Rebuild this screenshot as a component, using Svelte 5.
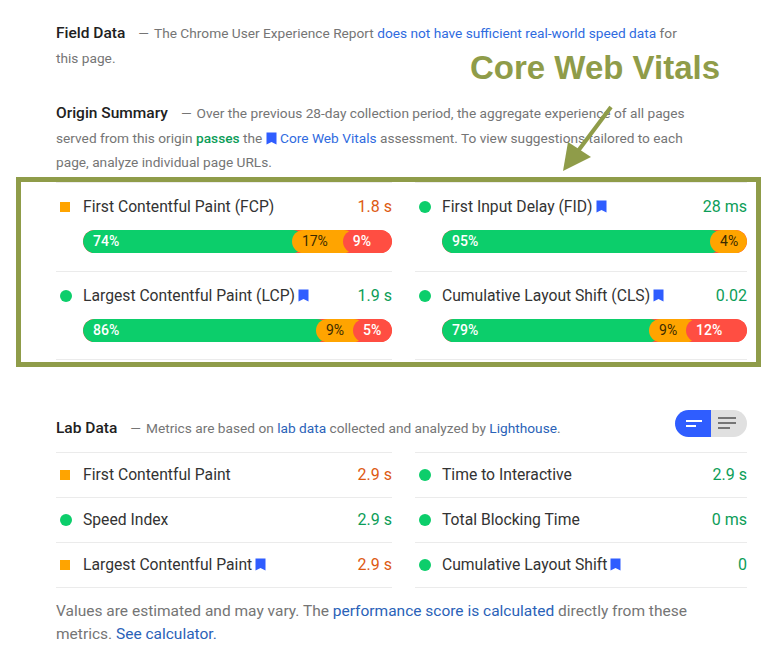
<script>
    const field = [
        { name: 'First Contentful Paint (FCP)', value: '1.8 s', rating: 'average', bars: [74, 17, 9], widths: [67.6, 16.5] },
        { name: 'First Input Delay (FID)', value: '28 ms', rating: 'pass', vital: true, bars: [95, 4], widths: [87.9] },
        { name: 'Largest Contentful Paint (LCP)', value: '1.9 s', rating: 'pass', vital: true, bars: [86, 9, 5], widths: [75.4, 12] },
        { name: 'Cumulative Layout Shift (CLS)', value: '0.02', rating: 'pass', vital: true, bars: [79, 9, 12], widths: [67.9, 12.1] }
    ];

    const lab = [
        { name: 'First Contentful Paint', value: '2.9 s', rating: 'average' },
        { name: 'Time to Interactive', value: '2.9 s', rating: 'pass' },
        { name: 'Speed Index', value: '2.9 s', rating: 'pass' },
        { name: 'Total Blocking Time', value: '0 ms', rating: 'pass' },
        { name: 'Largest Contentful Paint', value: '2.9 s', rating: 'average', vital: true },
        { name: 'Cumulative Layout Shift', value: '0', rating: 'pass', vital: true }
    ];

    const segClass = ['good', 'mid', 'bad'];
</script>

{#snippet bookmark()}
    <svg class="bookmark" width="11" height="13" viewBox="0 0 11 13">
        <path d="M0.5 0.5h10v12l-5-2.6-5 2.6z" fill="#2f5dff" />
    </svg>
{/snippet}

{#snippet head(item)}
    <div class="metric-head">
        <span class="icon {item.rating}"></span>
        <span class="name">{item.name}</span>
        {#if item.vital}{@render bookmark()}{/if}
        <span class="value {item.rating}">{item.value}</span>
    </div>
{/snippet}

<main class="page">
    <section class="field">
        <p class="intro">
            <strong>Field Data</strong><span class="dash">—</span>The Chrome User Experience Report
            <a href="#top">does not have sufficient real-world speed data</a> for this page.
        </p>
    </section>

    <section class="origin">
        <p class="intro">
            <strong>Origin Summary</strong><span class="dash">—</span>Over the previous 28-day collection period, the aggregate experience of all pages served from this origin
            <b class="passes">passes</b> the {@render bookmark()}
            <a href="#top">Core Web Vitals</a> assessment. To view suggestions tailored to each page, analyze individual page URLs.
        </p>
    </section>

    <div class="field-grid">
        {#each field as item}
            <div class="field-metric">
                {@render head(item)}
                <div class="bar">
                    {#each item.bars as pct, i}
                        <span class="seg {segClass[i]}" style={item.widths[i] ? `width: calc(${item.widths[i]}% + 12px)` : ''}>{pct}%</span>
                    {/each}
                </div>
            </div>
        {/each}
    </div>

    <section class="lab">
        <div class="lab-head">
            <p class="lab-intro">
                <strong>Lab Data</strong><span class="dash">—</span>Metrics are based on
                <a class="dark" href="#top">lab data</a> collected and analyzed by
                <a class="dark" href="#top">Lighthouse</a>.
            </p>
            <div class="toggle">
                <span class="toggle-on">
                    <i style="width: 16px"></i>
                    <i style="width: 10px"></i>
                </span>
                <span class="toggle-off">
                    <i style="width: 18px"></i>
                    <i style="width: 18px"></i>
                    <i style="width: 12px"></i>
                </span>
            </div>
        </div>
        <div class="lab-grid">
            {#each lab as item}
                <div class="lab-metric">{@render head(item)}</div>
            {/each}
        </div>
        <p class="note">
            Values are estimated and may vary. The
            <a class="dark" href="#top">performance score is calculated</a> directly from these metrics.
            <a class="dark" href="#top">See calculator.</a>
        </p>
    </section>

    <!-- annotation drawn over the report -->
    <div class="frame"></div>
    <div class="callout">Core Web Vitals</div>
    <svg class="arrow" width="60" height="70" viewBox="0 0 60 70">
        <line x1="51" y1="2" x2="18" y2="46" stroke="#8f9c49" stroke-width="4" />
        <polygon points="3,66 8,37 31,52" fill="#8f9c49" />
    </svg>
</main>

<style>
    :global(body) {
        margin: 0;
        background: #fff;
    }

    .page {
        position: relative;
        width: 768px;
        height: 650px;
        box-sizing: border-box;
        padding: 21px 21px 0 56px;
        overflow: hidden;
        font-family: Roboto, "Liberation Sans", sans-serif;
        font-size: 13.7px;
        color: #757575;
    }

    p {
        margin: 0;
    }

    a {
        color: #2f6be0;
        text-decoration: none;
    }

    a.dark {
        color: #2a62b8;
    }

    strong {
        font-size: 15.5px;
        font-weight: 500;
        color: #212121;
    }

    .intro {
        max-width: 640px;
        line-height: 24.5px;
    }

    .dash {
        margin: 0 5px 0 13px;
    }

    .origin {
        margin-top: 31px;
    }

    .passes {
        font-weight: 500;
        color: #0c9d58;
    }

    .bookmark {
        flex: none;
        vertical-align: -2px;
    }

    .field-grid {
        display: grid;
        grid-template-columns: 336px 332px;
        column-gap: 23px;
        margin-top: 7px;
    }

    .field-metric {
        box-sizing: border-box;
        height: 89px;
        border-top: 1px solid #ebebeb;
    }

    .field-metric:nth-child(n + 3) {
        border-bottom: 1px solid #ebebeb;
    }

    .metric-head {
        display: flex;
        align-items: center;
        gap: 3px;
        height: 24px;
        font-size: 15.7px;
        color: #333;
    }

    .field-metric .metric-head {
        margin-top: 12px;
    }

    .icon {
        flex: none;
        width: 12px;
        height: 12px;
        margin: 0 8px 0 4px;
        background: #0cce6b;
        border-radius: 50%;
    }

    .icon.average {
        width: 10px;
        height: 10px;
        margin: 0 10px 0 4px;
        background: #ffa400;
        border-radius: 0;
    }

    .value {
        margin-left: auto;
        font-size: 16px;
    }

    .value.pass {
        color: #0c9d58;
    }

    .value.average {
        color: #dd5a12;
    }

    .bar {
        display: flex;
        height: 23px;
        margin: 11px 0 0 27px;
        border-radius: 12px;
        overflow: hidden;
        background: #ff4e42;
        font-size: 14px;
        font-weight: 500;
        line-height: 22px;
    }

    .seg {
        flex: none;
        position: relative;
        box-sizing: border-box;
        padding-left: 10px;
        margin-right: -12px;
        border-radius: 12px;
        white-space: nowrap;
    }

    .seg:last-child {
        flex: 1;
        margin-right: 0;
    }

    .seg.good {
        z-index: 0;
        background: #0cce6b;
        color: #fff;
    }

    .seg.mid {
        z-index: 1;
        background: #ffa400;
        color: #3a2a00;
        font-weight: 400;
    }

    .seg.bad {
        z-index: 2;
        background: #ff4e42;
        color: #fff;
    }

    .lab {
        margin-top: 50px;
    }

    .lab-head {
        display: flex;
        align-items: flex-end;
        justify-content: space-between;
        height: 27px;
        padding-bottom: 15px;
    }

    .lab-intro {
        margin-bottom: -1px;
        line-height: 20px;
    }

    .toggle {
        display: flex;
        width: 72px;
        height: 27px;
        border-radius: 14px;
        overflow: hidden;
    }

    .toggle span {
        display: flex;
        flex-direction: column;
        justify-content: center;
    }

    .toggle-on {
        width: 36px;
        gap: 3px;
        padding-left: 11px;
        box-sizing: border-box;
        background: #2f5dff;
    }

    .toggle-on i {
        height: 2px;
        background: #fff;
    }

    .toggle-off {
        flex: 1;
        gap: 3px;
        padding-left: 7px;
        background: #e0e0e0;
    }

    .toggle-off i {
        height: 2px;
        background: #757575;
    }

    .lab-grid {
        display: grid;
        grid-template-columns: 336px 332px;
        column-gap: 23px;
    }

    .lab-metric {
        display: flex;
        align-items: center;
        box-sizing: border-box;
        height: 45px;
        border-top: 1px solid #ebebeb;
    }

    .lab-metric:nth-child(n + 5) {
        height: 46px;
        border-bottom: 1px solid #ebebeb;
    }

    .lab-metric .metric-head {
        flex: 1;
    }

    .note {
        max-width: 640px;
        margin-top: 12px;
        font-size: 15.5px;
        line-height: 23px;
    }

    .frame {
        position: absolute;
        left: 16px;
        top: 177px;
        width: 745px;
        height: 190px;
        box-sizing: border-box;
        border: 5px solid #8f9c49;
    }

    .callout {
        position: absolute;
        left: 470px;
        top: 48px;
        font-family: "Liberation Sans", Arial, sans-serif;
        font-size: 33px;
        font-weight: 700;
        line-height: 40px;
        color: #8f9c49;
        white-space: nowrap;
    }

    .arrow {
        position: absolute;
        left: 560px;
        top: 105px;
    }
</style>
